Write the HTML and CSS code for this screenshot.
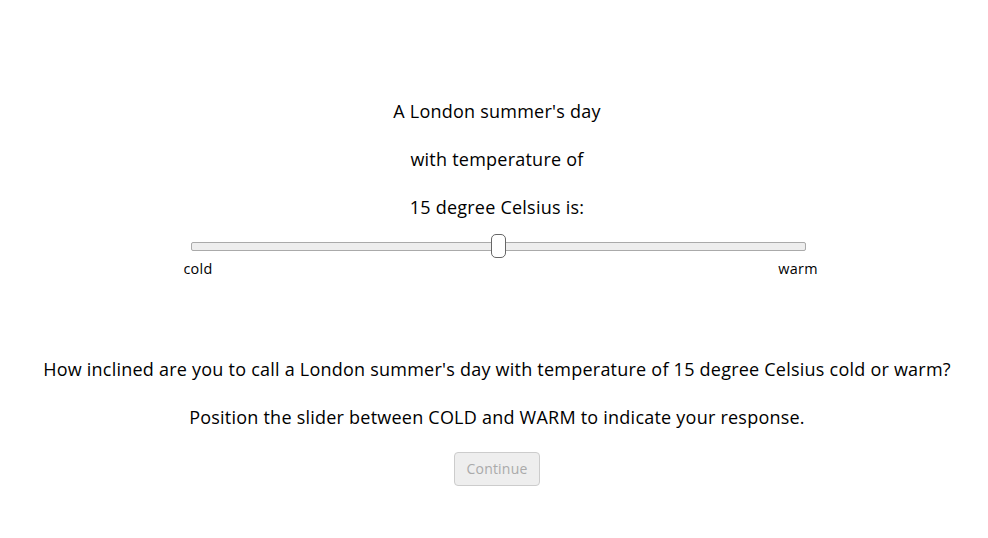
FILE: index.html
```html
<!DOCTYPE html>
<html lang="en">
<head>
<meta charset="utf-8">
<title>Slider response</title>
<link rel="stylesheet" href="styles.css">
</head>
<body>
<main class="page">
  <section class="stimulus">
    <p>A London summer's day</p>
    <p>with temperature of</p>
    <p>15 degree Celsius is:</p>
  </section>
  <div class="slider-block">
    <input class="slider" type="range" min="0" max="100" value="50" aria-label="cold to warm">
    <div class="labels">
      <span class="label">cold</span>
      <span class="label">warm</span>
    </div>
  </div>
  <section class="prompt">
    <p>How inclined are you to call a London summer's day with temperature of 15 degree Celsius cold or warm?</p>
    <p>Position the slider between COLD and WARM to indicate your response.</p>
  </section>
  <button class="btn" type="button" disabled>Continue</button>
</main>
</body>
</html>
```

FILE: styles.css
```css
html, body {
  margin: 0;
  padding: 0;
  background: #ffffff;
}

body {
  font-family: "Open Sans", "Liberation Sans", Arial, sans-serif;
  font-size: 18px;
  letter-spacing: 0.23px;
  color: #000000;
}

.page {
  display: flex;
  flex-direction: column;
  align-items: center;
  text-align: center;
  padding: 96px 0 0 6px;
}

.stimulus p,
.prompt p {
  margin: 0 0 18px;
  line-height: 30px;
  white-space: nowrap;
}

.stimulus p:last-child,
.prompt p:last-child {
  margin-bottom: 0;
}

.slider-block {
  margin: 12px 0 0 3px;
  width: 615px;
}

.slider {
  -webkit-appearance: none;
  appearance: none;
  display: block;
  width: 615px;
  height: 24px;
  margin: 0;
  padding: 0;
  background: transparent;
}

.slider:focus {
  outline: none;
}

.slider::-webkit-slider-runnable-track {
  box-sizing: border-box;
  height: 9px;
  background: #eeeeee;
  border: 1px solid #aaaaaa;
  border-radius: 2px;
}

.slider::-webkit-slider-thumb {
  -webkit-appearance: none;
  appearance: none;
  box-sizing: border-box;
  width: 15px;
  height: 24px;
  margin-top: -8.5px;
  border: 1px solid #666666;
  border-radius: 5px;
  background: #ffffff;
}

.labels {
  display: flex;
  justify-content: space-between;
  box-sizing: border-box;
  padding: 0 8px 0 7px;
  font-size: 14.4px;
  letter-spacing: 0.3px;
  line-height: 22px;
}

.label {
  width: 0;
  display: flex;
  justify-content: center;
  white-space: nowrap;
}

.prompt {
  margin-top: 73.5px;
}

.btn {
  margin-top: 20.5px;
  font-family: "Open Sans", "Liberation Sans", Arial, sans-serif;
  font-size: 14px;
  letter-spacing: 0.2px;
  line-height: 1.4;
  padding: 6px 12px;
  border: 1px solid #cccccc;
  border-radius: 4px;
  background: #eeeeee;
  color: #aaaaaa;
}
```
